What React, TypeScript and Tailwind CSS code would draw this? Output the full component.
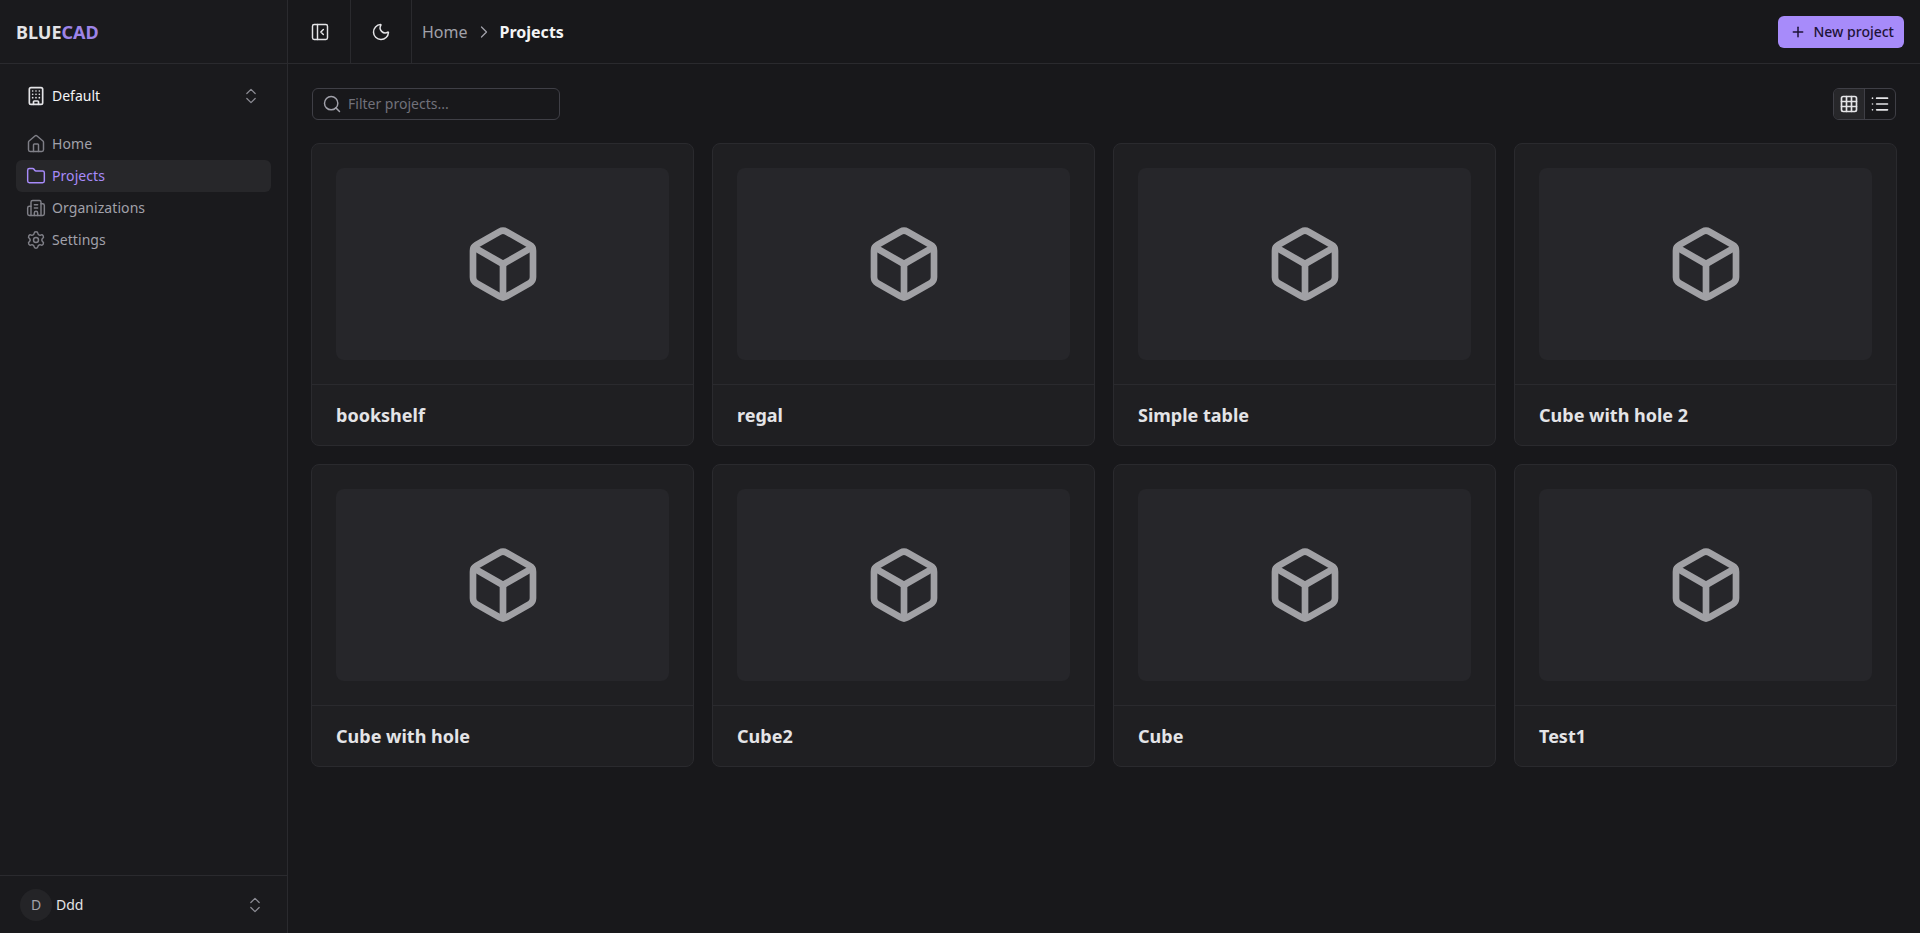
import { Box, Building, Building2, ChevronRight, ChevronsUpDown, Folder, Grid3x3, House, List, Moon, PanelLeftClose, Plus, Search, Settings } from 'lucide-react';
import React from 'react';

const projects = ['bookshelf', 'regal', 'Simple table', 'Cube with hole 2', 'Cube with hole', 'Cube2', 'Cube', 'Test1'];

const navItems = [
    { label: 'Home', icon: House, active: false },
    { label: 'Projects', icon: Folder, active: true },
    { label: 'Organizations', icon: Building2, active: false },
    { label: 'Settings', icon: Settings, active: false },
];

const Sidebar: React.FC = () => (
    <aside className="flex w-[288px] shrink-0 flex-col border-r border-[#2a2a2e] bg-[#1a1a1d]">
        <div className="flex h-16 items-center border-b border-[#2a2a2e] px-4 text-lg font-bold leading-7 text-[#e4e4e7]">
            BLUE<span className="text-[#9d84e8]">CAD</span>
        </div>
        <div className="flex-1 px-4 pt-4">
            <div className="flex h-8 items-center pl-2.5 pr-2.5">
                <Building className="h-5 w-5 text-[#e4e4e7]" strokeWidth={2} />
                <span className="ml-[6px] flex-1 text-sm font-normal text-[#f4f4f5]">Default</span>
                <ChevronsUpDown className="h-5 w-5 text-[#8b8b93]" strokeWidth={1.5} />
            </div>
            <nav className="mt-[16px] flex flex-col">
                {navItems.map((item) => (
                    <a
                        key={item.label}
                        className={`flex h-8 items-center gap-[6px] rounded-md pl-2.5 pr-2 text-sm tracking-[0.005em] ${item.active ? 'bg-[#27272a] text-[#a78bfa]' : 'text-[#a1a1aa]'}`}
                    >
                        <item.icon className={`h-5 w-5 ${item.active ? 'text-[#a78bfa]' : 'text-[#7f7f87]'}`} strokeWidth={1.75} />
                        {item.label}
                    </a>
                ))}
            </nav>
        </div>
        <div className="flex h-[58px] items-center border-t border-[#2a2a2e] pl-[20px] pr-[22px]">
            <div className="flex h-8 w-8 items-center justify-center rounded-full bg-[#242427] text-sm text-[#a1a1aa]">D</div>
            <span className="ml-[4px] flex-1 text-sm font-normal text-[#e4e4e7]">Ddd</span>
            <ChevronsUpDown className="h-5 w-5 text-[#8b8b93]" strokeWidth={1.5} />
        </div>
    </aside>
);

const Header: React.FC = () => (
    <header className="flex h-16 shrink-0 items-center border-b border-[#2a2a2e] pr-4">
        <button className="flex h-full w-[63px] items-center justify-center border-r border-[#2a2a2e] pl-px text-[#e4e4e7]">
            <PanelLeftClose className="h-5 w-5" strokeWidth={1.75} />
        </button>
        <button className="flex h-full w-[61px] items-center justify-center border-r border-[#2a2a2e] text-[#e4e4e7]">
            <Moon className="h-5 w-5" strokeWidth={1.75} />
        </button>
        <div className="ml-[10px] flex flex-1 items-center text-base">
            <span className="text-[#a1a1aa]">Home</span>
            <ChevronRight className="mx-[6px] h-5 w-5 text-[#a1a1aa]" strokeWidth={1.5} />
            <span className="font-bold text-[#f4f4f5]">Projects</span>
        </div>
        <button className="flex h-8 items-center gap-2 rounded-md bg-[#a78bfa] pl-3 pr-2.5 text-sm font-medium text-[#1e1338]">
            <Plus className="h-4 w-4" strokeWidth={2.25} />
            New project
        </button>
    </header>
);

const ProjectCard: React.FC<{ name: string }> = ({ name }) => (
    <div className="overflow-hidden rounded-lg border border-[#2a2a2e] bg-[#1f1f22]">
        <div className="border-b border-[#2a2a2e] p-6">
            <div className="flex h-[192px] items-center justify-center rounded-lg bg-[#26262a]">
                <Box className="h-20 w-20 text-[#a1a1a5]" strokeWidth={2} />
            </div>
        </div>
        <div className="px-6 py-4 text-lg font-bold leading-7 text-[#e4e4e7]">{name}</div>
    </div>
);

export default function App() {
    return (
        <div className="flex h-[933px] bg-[#18181b] [font-family:'Noto_Sans',sans-serif]">
            <Sidebar />
            <main className="flex min-w-0 flex-1 flex-col">
                <Header />
                <div className="pb-6 pl-[23px] pr-[23px] pt-6">
                    <div className="flex items-center justify-between pr-px">
                        <div className="ml-px flex h-8 w-[248px] items-center rounded-md border border-[#3f3f46] pl-[9px]">
                            <Search className="h-5 w-5 text-[#a1a1aa]" strokeWidth={1.75} />
                            <span className="ml-[6px] text-sm text-[#71717a]">Filter projects...</span>
                        </div>
                        <div className="flex h-8 overflow-hidden rounded-md border border-[#3f3f46]">
                            <button className="flex w-[30px] items-center justify-center bg-[#27272a] text-[#e4e4e7]">
                                <Grid3x3 className="h-5 w-5" strokeWidth={2} />
                            </button>
                            <button className="flex w-[31px] items-center justify-center border-l border-[#3f3f46] text-[#e4e4e7]">
                                <List className="h-5 w-5" strokeWidth={2} />
                            </button>
                        </div>
                    </div>
                    <div className="mt-[23px] grid grid-cols-4 gap-[18px]">
                        {projects.map((name) => (
                            <ProjectCard key={name} name={name} />
                        ))}
                    </div>
                </div>
            </main>
        </div>
    );
}
